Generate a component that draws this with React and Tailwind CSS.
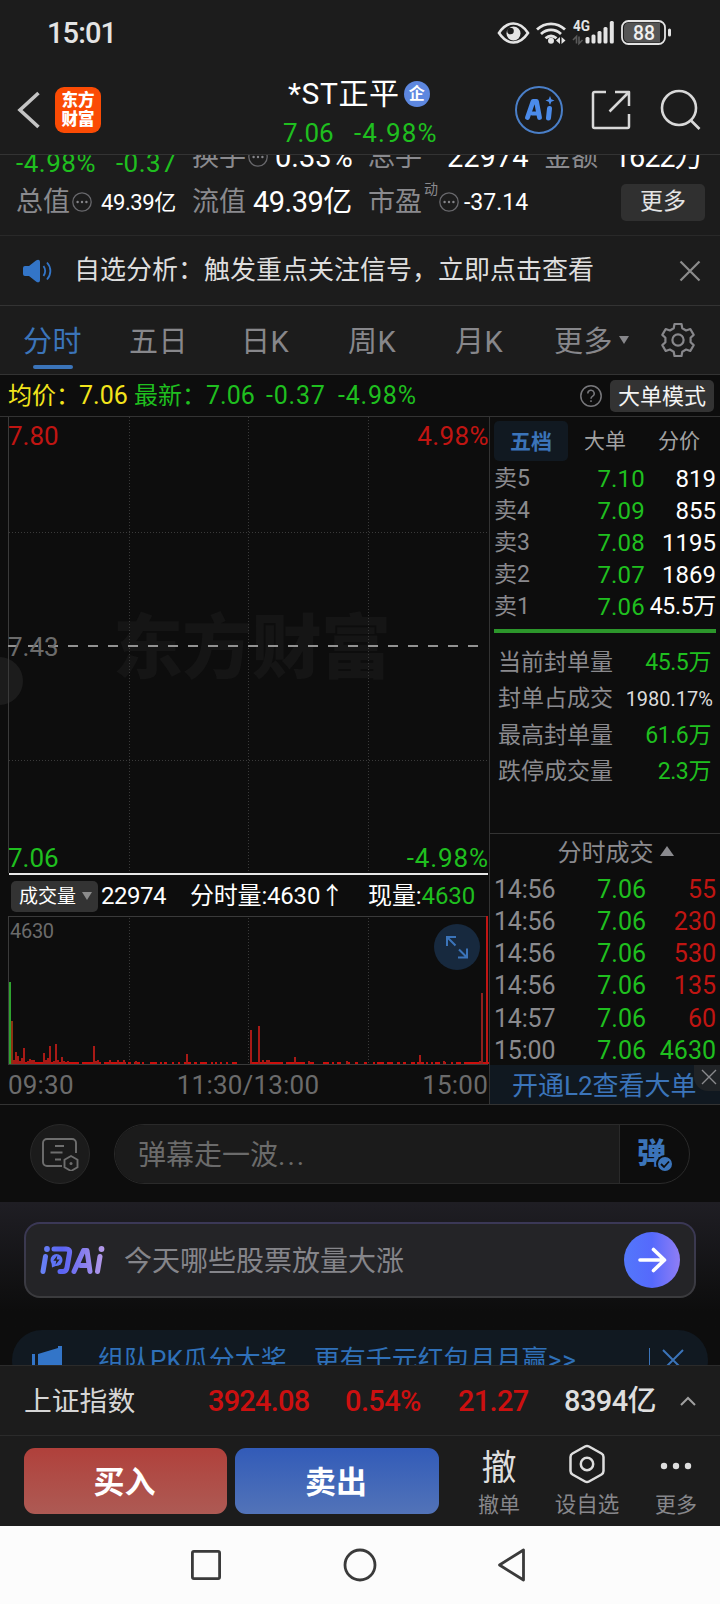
import React, { useState } from 'react';

const asks = [
  { label: '卖5', price: '7.10', volume: '819' },
  { label: '卖4', price: '7.09', volume: '855' },
  { label: '卖3', price: '7.08', volume: '1195' },
  { label: '卖2', price: '7.07', volume: '1869' },
  { label: '卖1', price: '7.06', volume: '45.5万', tight: true },
];

const sealStats = [
  { label: '当前封单量', value: '45.5万' },
  { label: '封单占成交', value: '1980.17%', plain: true },
  { label: '最高封单量', value: '61.6万' },
  { label: '跌停成交量', value: '2.3万' },
];

const trades = [
  { time: '14:56', price: '7.06', volume: '55', up: true },
  { time: '14:56', price: '7.06', volume: '230', up: true },
  { time: '14:56', price: '7.06', volume: '530', up: true },
  { time: '14:56', price: '7.06', volume: '135', up: true },
  { time: '14:57', price: '7.06', volume: '60', up: true },
  { time: '15:00', price: '7.06', volume: '4630', up: false },
];

// [x, height] of the bars that rise above the base line
const volumeBars = [
  [5, 4], [7, 12], [9, 8], [11, 3], [13, 6], [15, 16], [19, 3], [21, 5], [23, 4], [25, 4],
  [35, 11], [37, 4], [39, 6], [41, 18], [45, 3], [47, 20], [49, 4], [53, 7], [55, 3], [59, 3],
  [85, 18], [87, 3], [89, 4], [101, 4], [109, 4], [115, 4], [127, 3], [178, 10],
  [242, 34], [250, 38], [254, 4], [258, 4], [260, 4], [286, 7], [300, 3], [338, 3],
  [411, 9], [435, 3], [471, 3],
];

// [start, end] of the runs with almost no volume
const baseRuns = [
  [3, 70], [73, 92], [95, 117], [119, 122], [125, 131], [133, 135], [141, 148], [151, 153],
  [155, 158], [163, 165], [169, 171], [175, 182], [185, 188], [191, 198], [202, 204],
  [206, 208], [211, 213], [217, 219], [223, 228], [243, 274], [277, 296], [299, 305],
  [314, 320], [323, 325], [328, 332], [338, 341], [346, 349], [355, 358], [364, 366],
  [368, 375], [378, 384], [388, 391], [394, 397], [402, 406], [408, 415], [417, 419],
  [422, 424], [426, 431], [435, 437], [442, 444], [447, 452], [455, 480],
];

const MoreDot = ({ className }) => (
  <svg viewBox="0 0 20 20" className={`size-5 shrink-0 ${className || ''}`} fill="none" stroke="#68686c" strokeWidth="1.3">
    <circle cx="10" cy="10" r="9.2" />
    <g fill="#86868a" stroke="none">
      <circle cx="5.6" cy="10" r="1.2" />
      <circle cx="10" cy="10" r="1.2" />
      <circle cx="14.4" cy="10" r="1.2" />
    </g>
  </svg>
);

const StatusBar = () => (
  <div className="flex h-[66px] items-center pl-[47px] pr-[49px] text-[#e4e4e4]">
    <span className="pt-[2px] text-[29px] font-medium tracking-[-0.9px]">15:01</span>
    <svg viewBox="0 0 174 28" className="ml-auto h-7 w-[174px]" fill="none">
      <path d="M2 14C7 6.500 12 4.500 16.500 4.500S26 6.500 31 14c-5 7.500-10 9.500-14.500 9.500S7 21.500 2 14z" stroke="#e4e4e4" strokeWidth="2.600" />
      <circle cx="16.500" cy="14.500" r="7" fill="#e4e4e4" />
      <circle cx="13.500" cy="12" r="3.300" fill="#1c1c1c" />
      <g stroke="#e4e4e4" strokeWidth="2.800">
        <path d="M40 10.500c8-7.500 20-7.500 28 0M44 15c6-5.500 14-5.500 20 0M48.500 19.300c3.500-3 7.500-3 11 0" />
      </g>
      <circle cx="54" cy="21.800" r="3" fill="#e4e4e4" />
      <path d="M63 18v7l-4-3.500zM64.500 18v7l4-3.500z" fill="#e4e4e4" />
      <text x="76" y="12" fontSize="14" fontWeight="700" fill="#e4e4e4" textLength="17" lengthAdjust="spacingAndGlyphs">4G</text>
      <path d="M79.500 24.500v-7l-3.500 3.500M82 17.500v7l3.500-3.500" stroke="#5a5a5a" strokeWidth="1.600" />
      <g fill="#e4e4e4">
        <rect x="88.500" y="18" width="4" height="6.500" rx="1.500" />
        <rect x="94.500" y="15.500" width="4" height="9" rx="1.500" />
        <rect x="100.500" y="12" width="4" height="12.500" rx="1.500" />
        <rect x="106.500" y="8" width="4" height="16.500" rx="1.500" />
        <rect x="112.800" y="2" width="4" height="22.500" rx="1.500" />
      </g>
      <rect x="125" y="2" width="43" height="23" rx="6.500" stroke="#e4e4e4" strokeWidth="1.800" />
      <path d="M132 3.500h31v20h-31a5 5 0 0 1-5-5v-10a5 5 0 0 1 5-5z" fill="#555" />
      <rect x="171" y="9.500" width="3" height="8" rx="1.500" fill="#e4e4e4" />
      <text x="136" y="21" fontSize="21" fontWeight="500" fill="#f0f0f0" textLength="22" lengthAdjust="spacingAndGlyphs">88</text>
    </svg>
  </div>
);

const Header = () => (
  <div className="flex h-[89px] items-start border-b border-[#333]">
    <div className="flex w-[283px] items-center pl-[17px] pt-[21px]">
      <svg viewBox="0 0 24 38" className="-mt-px h-[38px] w-6" fill="none" stroke="#c4c4c4" strokeWidth="3.600">
        <path d="M21.500 2L3 19l18.500 17" />
      </svg>
      <div className="ml-[14px] flex size-[46px] flex-col items-center justify-center rounded-[9px] bg-[#fb4b04] text-[16.500px] font-black leading-[19px] text-white">
        <span>东方</span>
        <span>财富</span>
      </div>
    </div>
    <div className="flex w-[228px] flex-col pt-3">
      <div className="flex items-center pl-[5px]">
        <span className="text-[30px] leading-8 tracking-[0.600px] text-white">*ST正平</span>
        <span className="ml-[4px] flex size-[26px] items-center justify-center rounded-full bg-[#5d87df] text-[16px] font-bold leading-none text-white">企</span>
      </div>
      <div className="mt-[7px] flex text-[26px] leading-[32px] text-[#1fbf1f]">
        <span className="w-[71px]">7.06</span>
        <span className="tracking-[1.100px]">-4.98%</span>
      </div>
    </div>
    <svg viewBox="0 0 48 48" className="ml-[4px] mt-5 size-12" fill="none">
      <circle cx="24" cy="24" r="23" stroke="#4a7fc8" strokeWidth="2" />
      <g stroke="#4b8bea" strokeLinecap="round" strokeLinejoin="round">
        <path d="M12.500 31.500L18 15.500h3.500L24.500 31.500" strokeWidth="4.800" />
        <path d="M17 27.500h6" strokeWidth="4" />
        <path d="M34.500 22.500l-1 9.500" strokeWidth="5" />
      </g>
      <path d="M35 10l1.300 3.200 3.200 1.300-3.200 1.300L35 19l-1.300-3.200-3.200-1.300 3.200-1.300z" fill="#4b8bea" />
    </svg>
    <svg viewBox="0 0 42 42" className="ml-[27px] mt-[23px] size-[42px]" fill="none" stroke="#d8d8d8" strokeWidth="2.500" strokeLinejoin="round">
      <path d="M16 3H4.500A1.500 1.500 0 0 0 3 4.500v33A1.500 1.500 0 0 0 4.500 39h33a1.500 1.500 0 0 0 1.500-1.500V25" />
      <path d="M25 3h14v14M38.500 3.500L19.500 22.500" />
    </svg>
    <svg viewBox="0 0 42 42" className="ml-[28px] mt-[22px] size-[42px]" fill="none" stroke="#d8d8d8" strokeWidth="2.600">
      <circle cx="19" cy="20" r="17" />
      <path d="M31 32.500l8.500 8.500" />
    </svg>
  </div>
);

const QuoteStats = () => (
  <div className="flex h-[81px] flex-col overflow-hidden border-b border-[#292929] pl-[16px] text-[27px] text-[#8a8a8e]">
    <div className="-mt-[24px] grid h-[38px] shrink-0 grid-cols-[176px_176px_176px_160px] items-center leading-[38px]">
      <div className="flex gap-[20px] pt-[13px] text-[26px] tracking-[0.500px] text-[#1fbf1f]">
        <span>-4.98%</span>
        <span>-0.37</span>
      </div>
      <div className="flex items-center">
        <span>换手</span>
        <MoreDot className="ml-[2px]" />
        <span className="ml-[7px] text-[29px] text-white">0.33%</span>
      </div>
      <div className="flex">
        <span>总手</span>
        <span className="ml-[25px] text-[29px] text-white">22974</span>
      </div>
      <div className="flex">
        <span>金额</span>
        <span className="ml-[16px] text-[29px] tracking-[-1.200px] text-white">1622万</span>
      </div>
    </div>
    <div className="mt-[13px] grid h-[38px] grid-cols-[176px_176px_176px_160px] items-center leading-[38px]">
      <div className="flex items-center">
        <span>总值</span>
        <MoreDot className="ml-[2px]" />
        <span className="ml-[9px] pt-[2px] text-[22px] tracking-[-0.400px] text-white">49.39亿</span>
      </div>
      <div className="flex items-center">
        <span>流值</span>
        <span className="ml-[7px] text-[29px] tracking-[-0.5px] text-white">49.39亿</span>
      </div>
      <div className="flex items-center">
        <span>市盈</span>
        <span className="ml-[2px] -mt-[26px] text-[14px] leading-none">动</span>
        <MoreDot className="ml-px" />
        <span className="ml-[5px] pt-[2px] text-[23px] text-white">-37.14</span>
      </div>
      <button className="ml-[77px] h-[37px] w-[84px] rounded-[5px] bg-[#303030] text-[23px] leading-[36px] text-[#e4e4e4]">更多</button>
    </div>
  </div>
);

const NoticeBar = () => (
  <div className="flex h-[70px] items-center border-b border-[#333] pl-[22px] pr-[19px]">
    <svg viewBox="0 0 30 26" className="h-[26px] w-[30px]" fill="none">
      <path d="M3 8h4l7-5.500C16 1 18 1.500 18 4v18c0 2.500-2 3-4 1.500L7 18H3a2 2 0 0 1-2-2v-6a2 2 0 0 1 2-2z" fill="#3375c8" />
      <path d="M21.500 8c2 3 2 7 0 10" stroke="#3375c8" strokeWidth="1.800" />
      <path d="M25 4.500c4.500 5 4.500 12 0 17" stroke="#3375c8" strokeWidth="1.800" />
    </svg>
    <span className="ml-[22px] whitespace-nowrap text-[26px] text-[#dedede]">自选分析：触发重点关注信号，立即点击查看</span>
    <svg viewBox="0 0 22 22" className="ml-auto size-[22px]" stroke="#8c8c8c" strokeWidth="2.200">
      <path d="M1.500 1.500l19 19M20.500 1.500l-19 19" />
    </svg>
  </div>
);

const PeriodTabs = () => {
  const [active, setActive] = useState('分时');
  const tabs = [
    { name: '分时', box: 'w-[106px]' },
    { name: '五日', box: 'w-[112px]' },
    { name: '日K', box: 'w-[107px]' },
    { name: '周K', box: 'w-[107px]' },
    { name: '月K', box: 'w-[99px]' },
  ];
  return (
    <div className="flex h-[69px] items-center border-b border-[#333] pl-[23px] text-[29px] text-[#87878b]">
      {tabs.map((tab) => (
        <button key={tab.name} onClick={() => setActive(tab.name)} className={`flex h-full ${tab.box}`}>
          <span className={`flex flex-col items-center pt-[13px] leading-[46px] tracking-[0.500px] ${active === tab.name ? 'text-[#3b74b9]' : ''}`}>
            {tab.name}
            {active === tab.name && <span className="h-1 w-10 rounded-full bg-[#3b74b9]" />}
          </span>
        </button>
      ))}
      <span className="pt-[3px] leading-[46px] tracking-[0.500px]">更多</span>
      <svg viewBox="0 0 10 8" className="ml-[6px] h-2 w-2.5" fill="#87878b">
        <path d="M0 0h10L5 8z" />
      </svg>
      <svg viewBox="0 0 36 36" className="ml-[31px] size-9" fill="none" stroke="#87878b" strokeWidth="2.200" strokeLinejoin="round">
        <path d="M14.500 2h7l.8 4.300 3.800 2.200 4.200-1.500 3.400 5.900-3.100 2.800v4.600l3.100 2.800-3.400 5.900-4.200-1.500-3.800 2.200-.8 4.300h-7l-.8-4.300-3.800-2.200L5.700 29l-3.400-5.900 3.100-2.800v-4.600l-3.100-2.800L5.700 7l4.200 1.500 3.800-2.200z" />
        <circle cx="18" cy="18" r="5.600" />
      </svg>
    </div>
  );
};

const PriceSummary = () => (
  <div className="flex h-[42px] items-center whitespace-nowrap border-b border-[#333] pl-[8px] pr-[6px] text-[24px] text-[#1fbf1f]">
    <span className="w-[71px] text-[#f2e41c]">均价：</span>
    <span className="w-[55px] text-[25px] text-[#f2e41c]">7.06</span>
    <span className="w-[72px]">最新：</span>
    <span className="w-[60px] text-[25px]">7.06</span>
    <span className="w-[72px] text-[25px] tracking-[0.800px]">-0.37</span>
    <span className="text-[25px] tracking-[0.800px]">-4.98%</span>
    <svg viewBox="0 0 22 22" className="ml-auto size-[22px]" fill="none" stroke="#77777b" strokeWidth="1.500">
      <circle cx="11" cy="11" r="10.200" />
      <path d="M7.800 8.500a3.200 3.200 0 1 1 4.600 2.900c-.9.500-1.400 1-1.400 2.300" />
      <path d="M11 15.200v1.800" />
    </svg>
    <button className="ml-2 h-8 w-[104px] rounded-[5px] bg-[#333] text-[22px] leading-[33px] text-[#f4f4f4]">大单模式</button>
  </div>
);

const PriceChart = () => (
  <div className="relative h-[459px] text-[26px] leading-8">
    <svg viewBox="0 0 489 459" className="absolute inset-0 h-full w-full" fill="none">
      <circle cx="-1" cy="264" r="24" fill="#1c1c1c" />
      <path d="M8.500 0v456" stroke="#3a3a3a" />
      <text x="113" y="256" fontSize="70" fontWeight="900" fill="#151515" textLength="278" fontFamily="Noto Sans CJK SC">东方财富</text>
      <path d="M129.500 0v455M248.500 0v455M368.500 0v455M9 115.500h479M9 343.500h479" stroke="#3a3a3a" strokeDasharray="1 2" />
      <path d="M8 229h472" stroke="#929292" strokeWidth="2" strokeDasharray="10 10" />
      <path d="M9 457h479" stroke="#e8e8e8" strokeWidth="2" />
    </svg>
    <span className="absolute left-[8px] top-[3px] text-[#c01512]">7.80</span>
    <span className="absolute right-0 top-[3px] tracking-[0.400px] text-[#c01512]">4.98%</span>
    <span className="absolute left-[8px] top-[214px] text-[#6b6b6b]">7.43</span>
    <span className="absolute bottom-[2px] left-[8px] text-[#1fbf1f]">7.06</span>
    <span className="absolute bottom-[2px] right-0 tracking-[0.900px] text-[#1fbf1f]">-4.98%</span>
  </div>
);

const VolumeChart = () => (
  <>
    <div className="flex h-10 items-center whitespace-nowrap pl-[11px] text-[24px] text-white">
      <button className="flex h-[31px] w-[87px] items-center rounded-[5px] bg-[#333] pl-[8px] text-[19px] leading-none">
        成交量
        <svg viewBox="0 0 10 8" className="ml-[6px] h-2 w-2.5" fill="#8c8c8c">
          <path d="M0 0h10L5 8z" />
        </svg>
      </button>
      <span className="ml-[3px] w-[89px] tracking-[-0.500px]">22974</span>
      <span className="w-[178px] tracking-[-0.200px]">分时量:4630↑</span>
      <span className="tracking-[-0.100px]">现量:<span className="text-[#1fbf1f]">4630</span></span>
    </div>
    <div className="relative h-[149px]">
      <svg viewBox="0 0 489 149" className="absolute inset-0 h-full w-full" fill="none" shapeRendering="crispEdges">
        <path d="M8.500 149V.5H488M8 148.500h480" stroke="#3a3a3a" />
        <path d="M129.500 2v146M248.500 2v146M368.500 2v146" stroke="#3a3a3a" strokeDasharray="1 2" />
        <g fill="#cc0f0c">
          {baseRuns.map(([from, to]) => (
            <rect key={from} x={9 + from} y="146" width={to - from} height="2" />
          ))}
        </g>
        <g fill="#a81a16">
          {volumeBars.map(([x, h]) => (
            <rect key={x} x={x + 8} y={148 - h} width="2" height={h} />
          ))}
        </g>
        <rect x="9" y="66" width="2" height="82" fill="#2fa32f" />
        <rect x="11" y="105" width="2" height="43" fill="#8a3412" />
        <rect x="481" y="77" width="2" height="71" fill="#8f211d" />
        <rect x="486" y="0" width="2" height="148" fill="#c01513" />
      </svg>
      <span className="absolute left-[10px] top-[3px] text-[20px] leading-6 tracking-[-0.3px] text-[#6b6b6b]">4630</span>
      <button className="absolute right-[9px] top-[8px] size-[46px] rounded-full bg-[#17293e]">
        <svg viewBox="0 0 46 46" className="size-[46px]" fill="none" stroke="#3b74b9" strokeWidth="2">
          <path d="M22 13h-9v9M13 13l8.500 8.500M33 24.500v9h-9M33 33.500L25 25.500" />
        </svg>
      </button>
    </div>
    <div className="flex h-[40px] items-center justify-between pl-[8px] pr-px text-[26px] tracking-[0.200px] text-[#6b6b6b]">
      <span>09:30</span>
      <span>11:30/13:00</span>
      <span>15:00</span>
    </div>
  </>
);

const OrderBook = () => (
  <div className="flex w-[230px] flex-col whitespace-nowrap text-[#8a8a8e]">
    <div className="mt-1 flex h-10 items-center pl-1 text-[21px] leading-[43px] text-[#a2a2a2]">
      <button className="h-10 w-[74px] rounded-[5px] bg-[#111921] font-bold text-[#3b74b9]">五档</button>
      <button className="ml-4">大单</button>
      <button className="ml-8">分价</button>
    </div>
    <div className="mt-[2px] flex flex-col pl-[4px] pr-[4px] text-[24px] leading-8">
      {asks.map((row) => (
        <div key={row.label} className="flex h-8">
          <span className="w-[71px] text-[23px]">{row.label}</span>
          <span className="w-[80px] text-right tracking-[0.200px] text-[#1fbf1f]">{row.price}</span>
          <span className={`-ml-3 flex-1 text-right text-white ${row.tight ? 'text-[23px] tracking-[-0.300px]' : ''}`}>{row.volume}</span>
        </div>
      ))}
    </div>
    <div className="ml-1 mr-1 mt-[6px] h-1 bg-[#2c962b]" />
    <div className="mt-[12px] flex flex-col pl-[8px] pr-[9px] leading-[36px]">
      {sealStats.map((row) => (
        <div key={row.label} className="flex h-[36.300px] justify-between">
          <span className="text-[23px]">{row.label}</span>
          <span className={row.plain ? '-mr-[2px] text-[20px] text-[#dcdcdc]' : 'text-[23px] tracking-[-0.400px] text-[#1fbf1f]'}>{row.value}</span>
        </div>
      ))}
    </div>
    <div className="mt-auto flex h-[39px] items-center justify-center border-t border-[#333] pl-[21px] text-[24px]">
      分时成交
      <svg viewBox="0 0 14 10" className="-mt-[3px] ml-[6px] h-2.5 w-3.5" fill="#8a8a8e">
        <path d="M7 0l7 10H0z" />
      </svg>
    </div>
    <div className="flex flex-col pl-[4px] pr-[4px] text-[25px] leading-[35px]">
      {trades.map((row, i) => (
        <div key={i} className="flex h-[32.200px]">
          <span className="w-[71px] tracking-[-0.200px]">{row.time}</span>
          <span className="w-[81px] text-right text-[#1fbf1f]">{row.price}</span>
          <span className={`flex-1 text-right ${row.up ? 'text-[#c01512]' : 'text-[#1fbf1f]'}`}>{row.volume}</span>
        </div>
      ))}
    </div>
    <div className="relative h-[39px] bg-[#101820] pl-[22px] text-[26px] leading-[42px] text-[#3b74b9]">
      开通L2查看大单
      <span className="absolute right-0 top-0 flex size-[26px] items-center justify-center rounded-bl-[14px] bg-[#202326]">
        <svg viewBox="0 0 16 16" className="ml-[3px] mt-[-3px] size-4" stroke="#8a8a8e" strokeWidth="1.400">
          <path d="M1 1l14 14M15 1L1 15" />
        </svg>
      </span>
    </div>
  </div>
);

const DanmakuBar = () => (
  <div className="flex h-[97px] items-center pl-[30px] pr-[30px]">
    <div className="flex size-[60px] items-center justify-center rounded-full border border-[#292929] bg-[#1b1b1b]">
      <svg viewBox="0 0 38 34" className="h-[34px] w-[38px]" fill="none" stroke="#6e6e6e" strokeWidth="1.900">
        <path d="M21 29H6a4 4 0 0 1-4-4V6a4 4 0 0 1 4-4h25a4 4 0 0 1 4 4v10" />
        <path d="M14 9h9M9.500 15.500h12M14 22.500h6" />
        <path d="M30 19l6.500 3.700v7.600L30 34l-6.500-3.700v-7.600z" />
        <circle cx="30" cy="26.500" r="1.500" fill="#6e6e6e" stroke="none" />
      </svg>
    </div>
    <div className="ml-6 flex h-[60px] flex-1 overflow-hidden rounded-full border border-[#2a2a2a]">
      <div className="flex-1 bg-[#1b1b1b] pl-[23px] text-[28px] leading-[61px] text-[#6b6b6b]">弹幕走一波<span className="tracking-[2px]">...</span></div>
      <div className="flex w-[70px] border-l border-[#2a2a2a] pl-[17px] pt-[14px]">
        <span className="relative text-[29px] font-black leading-[31px] text-[#3b74b9]">
          弹
          <svg viewBox="0 0 18 18" className="absolute -right-[8px] top-[16px] size-[18px]">
            <circle cx="9" cy="9" r="8" fill="#3b74b9" stroke="#0d0d0d" strokeWidth="2" />
            <path d="M5 9l3 3 5-5.500" fill="none" stroke="#0d0d0d" strokeWidth="1.800" />
          </svg>
        </span>
      </div>
    </div>
  </div>
);

const AskAi = () => (
  <div className="h-32 bg-linear-to-b from-[#1f1e24] to-[#0d0d0d] to-85% px-6 pt-5">
    <div className="rounded-[16px] bg-linear-to-b from-[#3b3857] to-[#3b3b3d] p-0.5">
      <div className="flex h-[72px] items-center rounded-[14px] bg-[#242427] pl-[13px] pr-[14px]">
        <svg viewBox="0 0 66 30" className="h-[30px] w-[66px]" fill="none" strokeLinecap="round" strokeLinejoin="round">
          <defs>
            <linearGradient id="askAi" gradientUnits="userSpaceOnUse" x1="0" y1="0" x2="66" y2="0">
              <stop offset="0" stopColor="#6a86f5" />
              <stop offset=".35" stopColor="#5a63f4" />
              <stop offset="1" stopColor="#b79be8" />
            </linearGradient>
          </defs>
          <g stroke="url(#askAi)" strokeWidth="5">
            <path d="M6.500 11.500L4 26.500" />
            <path d="M15 4h12c3 0 4 1.500 3.500 4l-2.500 14.500c-.4 2.500-1.500 4-4 4h-3" />
            <path d="M35 26.500l9.500-21h3.500L51 26.500M41.500 20.500h7" />
            <path d="M61 11.500L58.500 26.500" />
          </g>
          <circle cx="8" cy="4" r="2.900" fill="url(#askAi)" />
          <circle cx="62.500" cy="4" r="2.900" fill="url(#askAi)" />
          <circle cx="17.500" cy="15" r="6" fill="#5f74f5" />
          <path d="M12.500 17l.5 5.500 5-2z" fill="#5f74f5" />
          <path d="M18.300 10.500l-4 5.200h3l-.8 4 4.200-5.300h-3z" fill="#242427" />
        </svg>
        <span className="ml-[19px] pt-[3px] text-[28px] text-[#85858a]">今天哪些股票放量大涨</span>
        <button className="ml-auto size-14 rounded-full bg-linear-to-r from-[#5377fb] via-[#5569fc] to-[#8f7df5]">
          <svg viewBox="0 0 56 56" className="size-14" fill="none" stroke="#fff" strokeWidth="3.600" strokeLinecap="round" strokeLinejoin="round">
            <path d="M16 28h24M29.500 17.500L40.500 28 29.500 38.500" />
          </svg>
        </button>
      </div>
    </div>
  </div>
);

const PromoBanner = () => (
  <div className="h-[35px] overflow-hidden px-3">
    <div className="flex h-[60px] items-center whitespace-nowrap rounded-[30px] bg-[#111921] pl-5 pr-6 text-[26px] text-[#2f70b8]">
      <svg viewBox="0 0 30 30" className="h-[30px] w-[30px]" fill="#3375c8">
        <path d="M0 9h3v14H0zM6 9L26 3V1h4v28h-4v-2L6 22z" />
      </svg>
      <span className="ml-[36px]">组队PK瓜分大奖</span>
      <span className="ml-[27px]">更有千元红包月月赢<span className="tracking-[0.800px]">&gt;&gt;</span></span>
      <span className="ml-auto h-6 w-px bg-[#3b74b9]" />
      <svg viewBox="0 0 22 22" className="ml-3 size-[22px]" stroke="#3b74b9" strokeWidth="2">
        <path d="M1 1l20 20M21 1L1 21" />
      </svg>
    </div>
  </div>
);

const IndexBar = () => (
  <div className="flex h-[71px] items-center whitespace-nowrap border-b border-t border-[#2b2b2b] bg-[#1c1c1c] pl-6 text-[29px] font-medium text-[#cc1010]">
    <span className="w-[184px] pt-[3px] text-[27.800px] font-normal text-[#d6d6d6]">上证指数</span>
    <span className="w-[137px] pt-[3px] tracking-[-0.800px]">3924.08</span>
    <span className="w-[113px] pt-[3px] tracking-[-0.600px]">0.54%</span>
    <span className="w-[106px] pt-[3px] tracking-[-0.700px]">21.27</span>
    <span className="w-[116px] pt-[3px] tracking-[-0.600px] text-[#dedede]">8394亿</span>
    <svg viewBox="0 0 16 10" className="h-2.5 w-4" fill="none" stroke="#a0a0a0" strokeWidth="2">
      <path d="M1 9l7-7 7 7" />
    </svg>
  </div>
);

const TradeBar = () => (
  <div className="flex h-[90px] bg-[#1c1c1c] pl-6 pt-3 text-[#dedede]">
    <button className="h-[66px] w-[203px] rounded-[11px] bg-linear-to-b from-[#b0403b] to-[#ad5a54] pr-[2px] text-[31px] font-bold leading-[69px] text-white">买入</button>
    <button className="ml-2 h-[66px] w-[204px] rounded-[11px] bg-linear-to-b from-[#325bb8] to-[#5273b8] pr-[2px] text-[31px] font-bold leading-[69px] text-white">卖出</button>
    <div className="ml-[39px] flex w-[42px] flex-col items-center">
      <span className="pt-[2px] text-[35px] leading-[38px]">撤</span>
      <span className="mt-[2px] text-[21px] leading-[30px] text-[#87878b]">撤单</span>
    </div>
    <div className="ml-[34px] flex w-[66px] flex-col items-center">
      <svg viewBox="0 0 38 40" className="-mt-1 h-10 w-[38px]" fill="none" stroke="#dedede" strokeWidth="2.500" strokeLinejoin="round">
        <path d="M17 2.500a4 4 0 0 1 4 0L33.500 9.500a4 4 0 0 1 2 3.400v14.200a4 4 0 0 1-2 3.400L21 37.500a4 4 0 0 1-4 0L4.500 30.500a4 4 0 0 1-2-3.400V12.900a4 4 0 0 1 2-3.400z" />
        <circle cx="19" cy="20" r="6.200" />
      </svg>
      <span className="mt-[6px] text-[21.500px] leading-[30px] text-[#87878b]">设自选</span>
    </div>
    <div className="ml-[34px] flex w-[44px] flex-col items-center">
      <svg viewBox="0 0 32 38" className="h-[38px] w-8" fill="#dedede">
        <circle cx="4" cy="18" r="3.200" />
        <circle cx="16" cy="18" r="3.200" />
        <circle cx="28" cy="18" r="3.200" />
      </svg>
      <span className="mt-1 text-[21px] leading-[30px] text-[#87878b]">更多</span>
    </div>
  </div>
);

const SystemNav = () => (
  <div className="flex h-[78px] items-center bg-[#fcfcfc] pl-[190px]">
    <svg viewBox="0 0 340 36" className="h-9 w-[340px]" fill="none" stroke="#3a3a3a" strokeWidth="2.800" strokeLinejoin="round">
      <rect x="2.400" y="4.400" width="27.200" height="27.200" rx="1.500" />
      <circle cx="170" cy="18" r="15" />
      <path d="M333.500 3v30L309.500 18z" />
    </svg>
  </div>
);

const App = () => {
  return (
    <div className="flex h-[1604px] w-[720px] flex-col overflow-hidden bg-[#0d0d0d] font-[Roboto,'Noto_Sans_CJK_SC',sans-serif]">
      <div className="bg-[#1c1c1c]">
        <StatusBar />
        <Header />
        <QuoteStats />
        <NoticeBar />
        <PeriodTabs />
      </div>
      <PriceSummary />
      <div className="flex h-[688px] border-b border-[#333]">
        <div className="w-[490px] border-r border-[#333]">
          <PriceChart />
          <VolumeChart />
        </div>
        <OrderBook />
      </div>
      <DanmakuBar />
      <AskAi />
      <PromoBanner />
      <IndexBar />
      <TradeBar />
      <SystemNav />
    </div>
  );
};

export default App;
